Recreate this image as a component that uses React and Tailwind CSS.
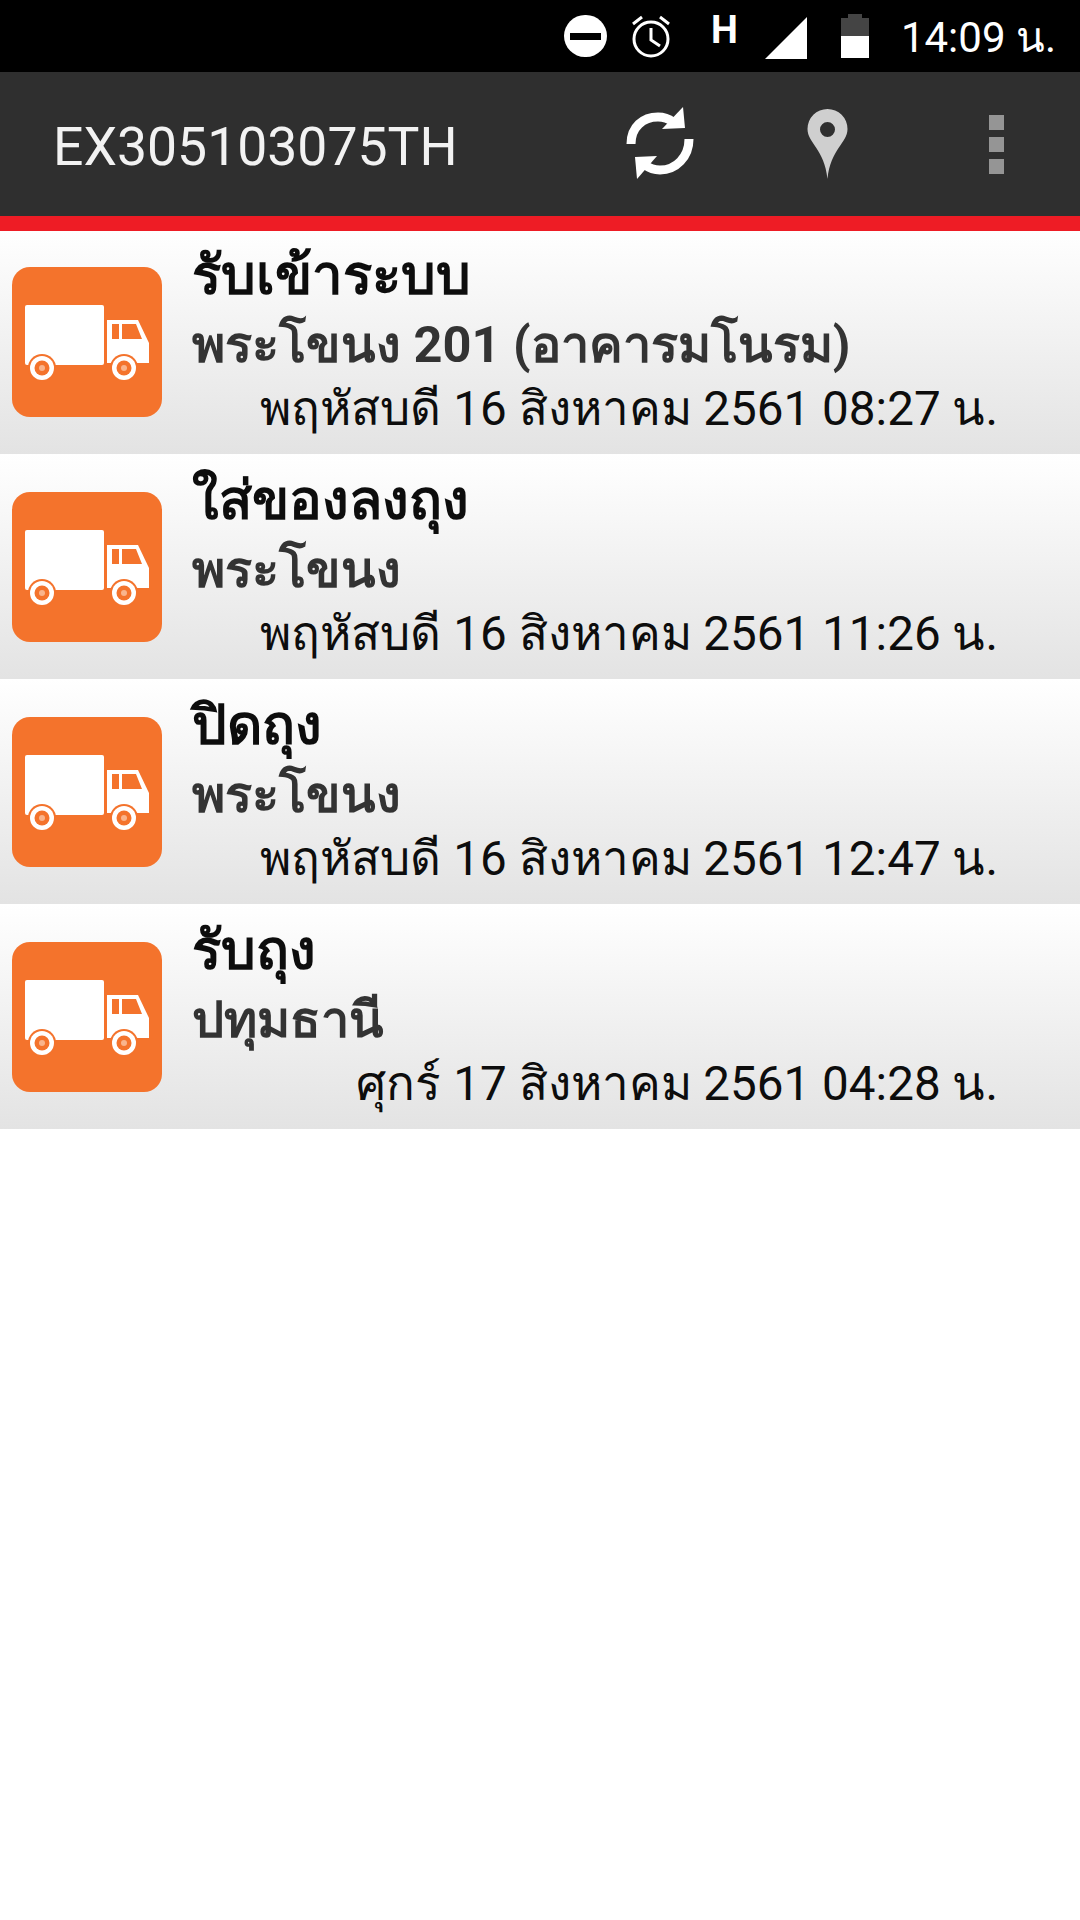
import React from "react";

const rows = [
  { title: "รับเข้าระบบ", place: "พระโขนง 201 (อาคารมโนรม)", time: "พฤหัสบดี 16 สิงหาคม 2561 08:27 น." },
  { title: "ใส่ของลงถุง", place: "พระโขนง", time: "พฤหัสบดี 16 สิงหาคม 2561 11:26 น." },
  { title: "ปิดถุง", place: "พระโขนง", time: "พฤหัสบดี 16 สิงหาคม 2561 12:47 น." },
  { title: "รับถุง", place: "ปทุมธานี", time: "ศุกร์ 17 สิงหาคม 2561 04:28 น." },
];

const Wheel = ({ cx }) => (
  <>
    <circle cx={cx} cy="101" r="14" fill="#f4732c" />
    <circle cx={cx} cy="101" r="12" fill="#fff" />
    <circle cx={cx} cy="101" r="7.500" fill="#f4732c" />
    <circle cx={cx} cy="101" r="3" fill="#f9b48c" />
  </>
);

const Truck = () => (
  <svg width="150" height="150" viewBox="0 0 150 150" className="block">
    <rect x="13" y="38" width="79" height="60" rx="2" fill="#fff" />
    <path d="M95 53h31l11 23v20H95z" fill="#fff" />
    <path d="M100 57h7v15h-7zM110 57h14l6 15h-20z" fill="#f4732c" />
    <Wheel cx={30} />
    <Wheel cx={112} />
  </svg>
);

const Row = ({ title, place, time }) => (
  <div className="h-[225px] bg-[linear-gradient(#ffffff,#e3e3e3)] flex items-center pl-3">
    <div className="w-[150px] h-[150px] rounded-[18px] bg-[#f4732c] shrink-0 overflow-hidden">
      <Truck />
    </div>
    <div className="flex-1 ml-[30px] pr-[82px] h-full">
      <div className="h-[68px] pt-[12px] text-[54.500px] leading-[68px] font-bold text-[#0d0d0d] whitespace-nowrap">{title}</div>
      <div className="h-[71px] pt-[15px] text-[50.500px] leading-[66px] font-bold text-[#333] whitespace-nowrap">{place}</div>
      <div className="pt-[10px] text-[47.600px] leading-[62px] text-[#0d0d0d] text-right whitespace-nowrap">{time}</div>
    </div>
  </div>
);

export default function App() {
  return (
    <div className="w-[1080px] h-[1920px] bg-white font-['Roboto','Noto_Sans',sans-serif] overflow-hidden">
      <div className="h-[72px] bg-black flex items-center justify-end text-white">
        <div className="w-[43px] h-[42px] rounded-full bg-white flex items-center justify-center mr-[23px]">
          <div className="w-[31px] h-[7px] bg-black"></div>
        </div>
        <svg width="42" height="43" viewBox="0 0 42 43" className="mr-[39px]">
          <circle cx="21" cy="24" r="17" fill="none" stroke="#fff" strokeWidth="3" />
          <path d="M21 13v12l9 6M3 9l9-7M39 9l-9-7" fill="none" stroke="#fff" strokeWidth="3" />
        </svg>
        <div className="text-[38px] font-bold leading-none mb-[12px] mr-[27px]">H</div>
        <svg width="42" height="42" viewBox="0 0 42 42" className="mr-[34px] mt-[3px]">
          <path d="M42 0v42H0z" fill="#fff" />
        </svg>
        <svg width="28" height="44" viewBox="0 0 28 44" className="mr-[32px]">
          <path d="M7 0h14v4h7v18H0V4h7z" fill="#444" />
          <path d="M0 22h28v22H0z" fill="#fff" />
        </svg>
        <div className="text-[42px] leading-none mt-[3px] mr-[24px] whitespace-nowrap">14:09 น.</div>
      </div>
      <div className="h-[144px] bg-[#2f2f2f] flex items-center">
        <div className="ml-[53px] text-[53.500px] mt-[6px] text-[#f2f2f2] w-[573px]">EX305103075TH</div>
        <svg width="68" height="74" viewBox="0 0 68 74">
          <path d="M5 37C5 20 17 10 32 10c6 0 11 2 15 5" fill="none" stroke="#fff" strokeWidth="9" />
          <path d="M57 0l2 21-23 1z" fill="#fff" />
          <path d="M63 32c0 18-13 31-29 31-6 0-11-2-15-5" fill="none" stroke="#fff" strokeWidth="9" />
          <path d="M11 72L9 50l22-1z" fill="#fff" />
        </svg>
        <svg width="41" height="70" viewBox="0 0 41 70" className="ml-[113px]">
          <path fillRule="evenodd" d="M20.500 0a20 20 0 0 1 20 20c0 14-17 20-20 50C17.500 40 .5 34 .5 20a20 20 0 0 1 20-20zm0 13a7.500 7.500 0 1 0 0 15 7.500 7.500 0 0 0 0-15z" fill="#cfcfcf" />
        </svg>
        <div className="ml-[141px] flex flex-col gap-[7px]">
          <div className="w-[15px] h-[15px] bg-[#959595]"></div>
          <div className="w-[15px] h-[15px] bg-[#959595]"></div>
          <div className="w-[15px] h-[15px] bg-[#959595]"></div>
        </div>
      </div>
      <div className="relative h-[15px] bg-[#ee1c25]"></div>
      <div className="-mt-[2px]">
        {rows.map((r) => (
          <Row key={r.time} {...r} />
        ))}
      </div>
    </div>
  );
}
